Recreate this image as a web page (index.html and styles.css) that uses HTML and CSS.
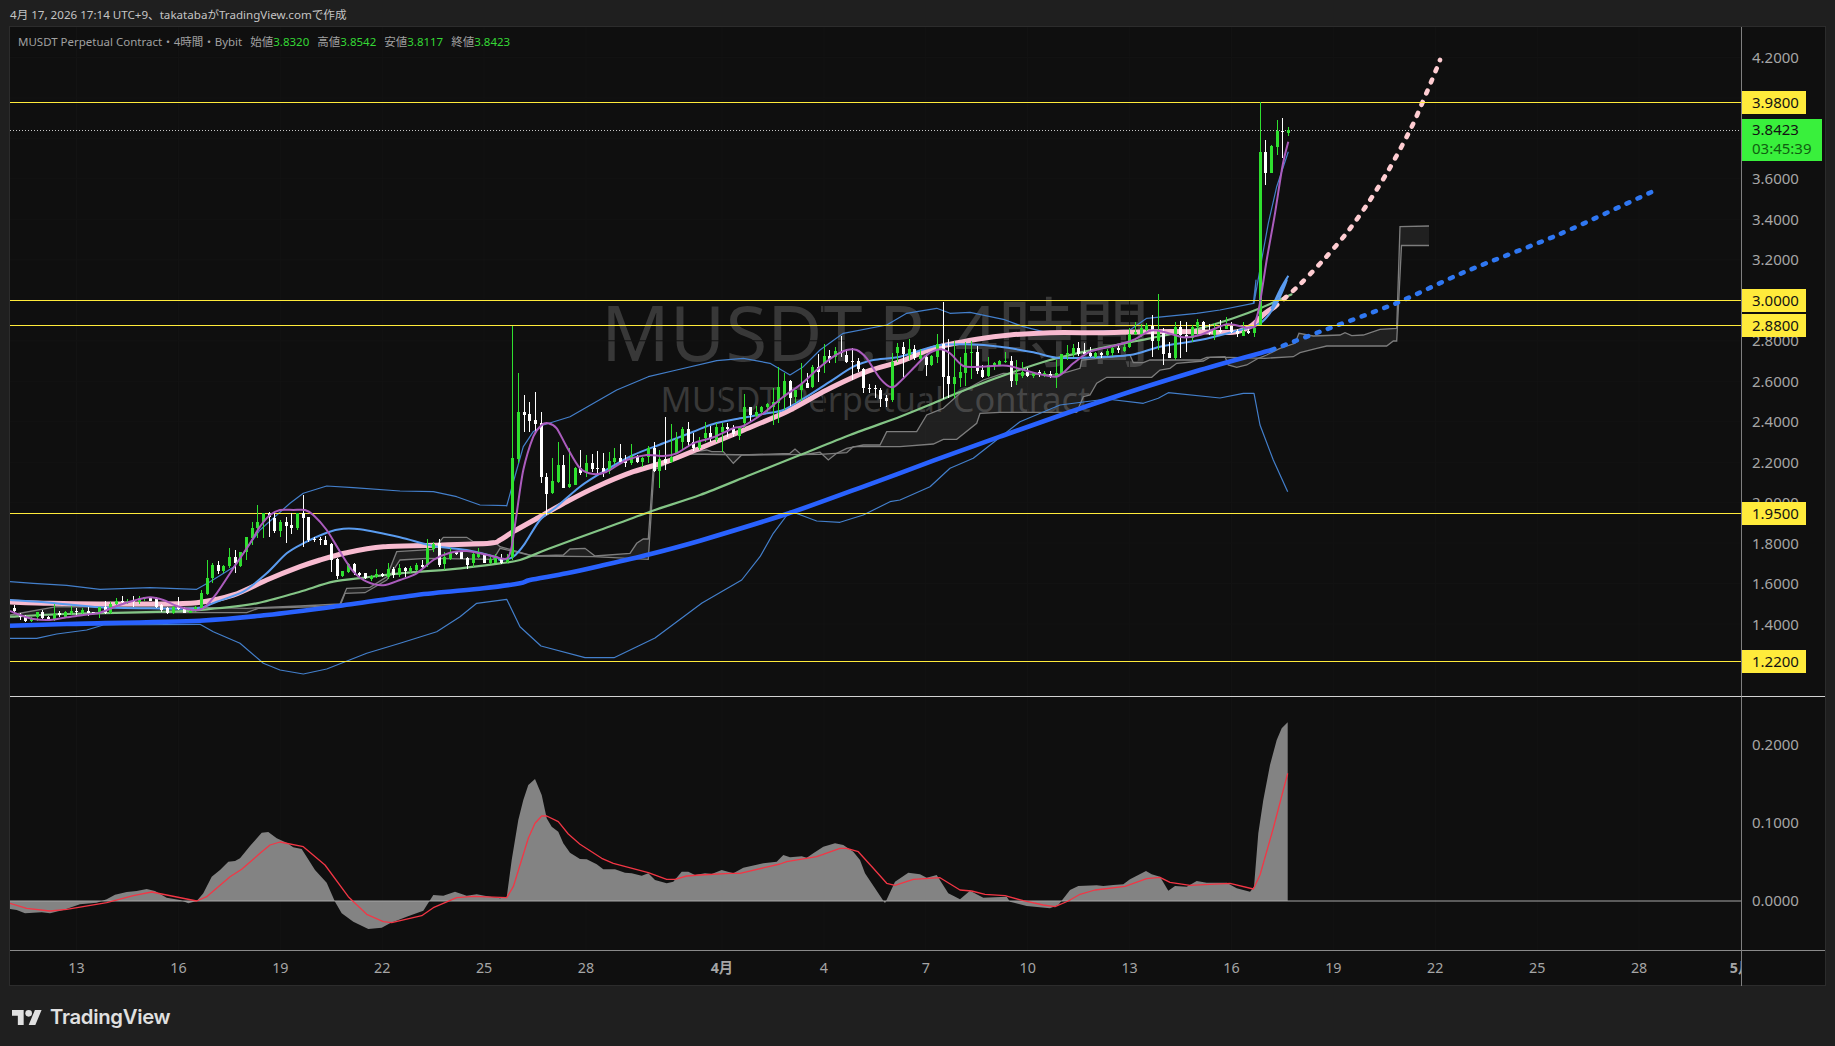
FILE: index.html
```html
<!DOCTYPE html>
<html lang="ja">
<head>
<meta charset="utf-8">
<title>MUSDT Perpetual Contract</title>
<link rel="stylesheet" href="styles.css">
</head>
<body>
<header class="caption">4月 17, 2026 17:14 UTC+9、takatabaがTradingView.comで作成</header>
<main class="chart">
  <section class="pane pane-price">
    <div class="watermark">
      <div class="wm-main">MUSDT.P, 4時間</div>
      <div class="wm-sub">MUSDT Perpetual Contract</div>
    </div>
    <svg id="priceSvg" class="plot" viewBox="10 27 1731 669" xmlns="http://www.w3.org/2000/svg"></svg>
    <div class="legend">
      <span class="l-title">MUSDT Perpetual Contract・4時間・Bybit</span>
      <span class="l-item">始値<b>3.8320</b></span>
      <span class="l-item">高値<b>3.8542</b></span>
      <span class="l-item">安値<b>3.8117</b></span>
      <span class="l-item">終値<b>3.8423</b></span>
    </div>
  </section>
  <aside class="scale" id="priceScale">
    <div class="tag tag-y" style="top:64px">3.9800</div>
    <div class="tag tag-last"><span>3.8423</span><span class="count">03:45:39</span></div>
    <div class="tag tag-y" style="top:262px">3.0000</div>
    <div class="tag tag-y" style="top:287px">2.8800</div>
    <div class="tag tag-y" style="top:475px">1.9500</div>
    <div class="tag tag-y" style="top:623px">1.2200</div>
  </aside>
  <section class="pane pane-osc">
    <svg id="oscSvg" class="plot" viewBox="10 697 1731 253" xmlns="http://www.w3.org/2000/svg"></svg>
  </section>
  <aside class="scale scale-osc">
    <div class="tick" style="top:37px">0.2000</div>
    <div class="tick" style="top:115px">0.1000</div>
    <div class="tick" style="top:193px">0.0000</div>
  </aside>
  <div class="time" id="timeAxis"></div>
  <div class="corner"></div>
</main>
<footer class="brand">
  <svg class="brand-mark" viewBox="0 4 36 18" xmlns="http://www.w3.org/2000/svg"><path d="M14 22H7V11H0V4h14v18zM28 22h-8l7.5-18h8L28 22z"/><circle cx="20" cy="8" r="4"/></svg>
  <span class="brand-name">TradingView</span>
</footer>
<script src="chart.js"></script>
</body>
</html>
```
FILE: styles.css
```css
* { box-sizing: border-box; }
html, body { margin: 0; height: 100%; }
body {
  width: 1835px;
  height: 1046px;
  overflow: hidden;
  background: #1f1f1f;
  display: flex;
  flex-direction: column;
  font-family: "Noto Sans", "Noto Sans CJK JP", sans-serif;
}
.caption {
  height: 26px;
  padding: 7px 0 0 10px;
  font-size: 11.6px;
  line-height: 16px;
  color: #c4c4c4;
}
.chart {
  width: 1817px;
  height: 960px;
  margin-left: 9px;
  border: 1px solid #2c2c2c;
  background: #0f0f0f;
  display: grid;
  grid-template-columns: 1731px 84px;
  grid-template-rows: 670px 254px 35px;
}
.pane { position: relative; overflow: hidden; border-bottom: 1px solid #d2d2d2; }
.pane-osc { border-bottom-color: #8a8a8a; }
.plot { position: absolute; left: 0; top: 0; width: 1731px; height: 669px; display: block; }
.pane-osc .plot { height: 253px; }
.watermark {
  position: absolute;
  inset: 0;
  display: flex;
  flex-direction: column;
  align-items: center;
  padding-top: 255px;
  color: #383838;
  white-space: nowrap;
}
.wm-main { font-size: 76px; line-height: 100px; }
.wm-sub { font-size: 34.3px; line-height: 44px; margin-top: -5px; }
.legend {
  position: absolute;
  left: 8px;
  top: 6px;
  display: flex;
  gap: 8px;
  font-size: 11.5px;
  line-height: 17px;
  color: #a0a0a0;
  white-space: nowrap;
}
.legend b { font-weight: 400; color: #35d835; }
.scale {
  position: relative;
  border-left: 1px solid #808080;
  border-bottom: 1px solid #d2d2d2;
  color: #a6a6a6;
  font-size: 15px;
  overflow: hidden;
}
.scale-osc { border-bottom-color: #8a8a8a; }
.tick { position: absolute; left: 10px; line-height: 20px; }
.tag {
  position: absolute;
  left: 0;
  padding-left: 10px;
  line-height: 23px;
  height: 23px;
  width: 64px;
  color: #131313;
}
.tag-y { background: #ffeb3b; }
.tag-last {
  top: 92px;
  width: 80px;
  height: 42px;
  background: #39f03c;
  display: flex;
  flex-direction: column;
  padding-top: 1px;
  line-height: 19px;
}
.count { color: #106010; }
.time { position: relative; overflow: hidden; color: #a6a6a6; font-size: 14.3px; }
.t-label { position: absolute; top: 7px; line-height: 20px; transform: translateX(-50%); white-space: nowrap; }
.t-major { font-weight: 700; }
.corner { border-left: 1px solid #808080; }
.brand { display: flex; align-items: center; gap: 8px; padding: 19px 0 0 12px; }
.brand-mark { width: 30px; height: 15px; fill: #e0e0e0; }
.brand-name { font-family: Inter, sans-serif; font-weight: 600; font-size: 20.3px; line-height: 24px; letter-spacing: -0.3px; color: #e0e0e0; }
```
FILE: chart.js
```js
const NS = 'http://www.w3.org/2000/svg';
function el(parent, name, attrs) {
  const e = document.createElementNS(NS, name);
  for (const k in attrs) e.setAttribute(k, attrs[k]);
  parent.appendChild(e);
  return e;
}
function S(x0, y0, a) {
  const r = [];
  for (let i = 0; i < a.length; i += 2) r.push([x0 + a[i] / 3, y0 + a[i + 1] / 3]);
  return r;
}
const Z4 = a => S(0, 480, a), Z5 = a => S(500, 300, a), Z6 = a => S(900, 280, a), Z7 = a => S(1200, 90, a);
function poly(p) { return 'M' + p.map(q => q[0].toFixed(1) + ' ' + q[1].toFixed(1)).join('L'); }
function smooth(p) {
  let d = 'M' + p[0][0].toFixed(1) + ' ' + p[0][1].toFixed(1);
  for (let i = 0; i < p.length - 1; i++) {
    const a = p[Math.max(i - 1, 0)], b = p[i], c = p[i + 1], e = p[Math.min(i + 2, p.length - 1)];
    const t = 0.14;
    d += 'C' + (b[0] + (c[0] - a[0]) * t).toFixed(1) + ' ' + (b[1] + (c[1] - a[1]) * t).toFixed(1) + ' ' +
      (c[0] - (e[0] - b[0]) * t).toFixed(1) + ' ' + (c[1] - (e[1] - b[1]) * t).toFixed(1) + ' ' +
      c[0].toFixed(1) + ' ' + c[1].toFixed(1);
  }
  return d;
}
const svg = document.getElementById('priceSvg');
const priceY = p => 300.3 + (3 - p) * 202.4;
const dayX = d => 76.5 + 33.97 * (d - 13);

/* faint grid */
const gridDays = [13,16,19,22,25,28,32,35,38,41,44,47,50,53,56,59,62];
gridDays.forEach(d => el(svg, 'line', { x1: dayX(d), x2: dayX(d), y1: 27, y2: 696, stroke: '#131313' }));
for (let p = 1.2; p < 4.4; p += 0.2) el(svg, 'line', { x1: 10, x2: 1741, y1: priceY(p), y2: priceY(p), stroke: '#131313' });

/* ichimoku cloud */
const cloudTop = [].concat(
  Z4([30,405,170,380,600,382,740,385,900,378,1020,372,1040,325,1110,322,1160,290,1190,215,1300,208,1330,172,1400,172,1420,185,1460,185,1480,182]),
  Z5([0,740,30,748,100,768,190,765,210,747,255,745,285,768,390,760,410,730,430,717,445,717,460,500,560,458,620,450,635,455,670,455,700,490,725,465,870,460,885,447,905,465,960,457,985,480,1010,460,1040,445,1090,435,1140,435,1160,395]),
  Z6([50,455,80,405,105,395,130,385,185,335,250,300,310,280,470,285,540,265,545,240,690,225,700,248,730,248,750,240,900,240,920,232,975,230,985,255,1010,262,1040,255,1075,235,1100,225,1140,205,1185,190,1197,160,1240,168,1320,165,1335,158,1355,167,1390,165,1440,148,1490,145]),
  [[1400,226.7],[1429,226]]
);
const cloudBot = [].concat(
  Z4([30,410,300,398,740,398,775,385,1020,378,1035,340,1095,338,1160,300,1200,240,1280,235,1480,238]),
  Z5([0,745,100,768,280,770,445,778,462,510,560,462,760,465,960,463,1040,458,1060,440,1190,440]),
  Z6([0,500,100,492,130,478,170,478,230,430,240,400,300,397,530,397,550,350,570,345,590,310,620,292,755,292,780,270,810,265,830,250,910,243,930,232,990,232,1095,235,1180,230,1200,218,1250,205,1280,198,1460,198,1480,183,1490,183]),
  [[1401.5,245.5],[1429,245.5]]
);
el(svg, 'path', { d: poly(cloudTop) + 'L' + cloudBot.slice().reverse().map(q => q[0].toFixed(1) + ' ' + q[1].toFixed(1)).join('L') + 'Z', fill: 'rgba(255,255,255,0.075)', stroke: 'none' });
el(svg, 'path', { d: poly(cloudTop), fill: 'none', stroke: '#7d7d7d', 'stroke-width': 1.3 });
el(svg, 'path', { d: poly(cloudBot), fill: 'none', stroke: '#7d7d7d', 'stroke-width': 1.3 });

/* bollinger outer bands */
const bbUp = [].concat(
  Z4([30,305,100,310,200,316,300,328,450,323,590,328,630,305,700,262,780,150,870,70,910,40,980,18,1060,23,1200,33,1300,35,1370,50,1440,75,1520,77]),
  Z5([20,618,50,510,70,440,100,395,130,375,210,350,350,270,445,230,530,210,650,182,730,175,810,190,870,225,910,200,960,150,1030,100,1160,75]),
  Z6([20,100,50,95,110,85,150,100,210,97,310,118,370,140,450,160,570,155,690,150,740,115,890,100,960,90,1060,70,1068,0]),
  Z7([162,640,183,520,205,400,230,290,265,185])
);
const bbDn = [].concat(
  Z4([30,475,110,475,170,462,260,450,310,435,600,433,640,455,720,490,790,550,840,570,910,582,980,567,1100,520,1200,490,1310,455,1380,410,1430,370,1520,358,1560,440]),
  [[541,646],[585,657.7],[614,657.7],[655,638],[702,603]],
  Z5([725,840,780,770,820,700,870,633,950,663,1020,667,1090,645,1170,605]),
  Z6([0,660,90,620,150,565,220,535,360,425,480,375,620,357,730,370,775,355,805,338,960,354,1030,340,1062,340,1080,435,1120,540,1163,635])
);
[bbUp, bbDn].forEach(p => el(svg, 'path', { d: poly(p), fill: 'none', stroke: '#437fcb', 'stroke-width': 1.2, 'stroke-linejoin': 'round' }));

/* thick blue */
const blueThick = [].concat(
  Z4([30,437,200,432,600,422,800,405,1000,380,1250,345,1450,325,1560,310]),
  Z5([90,840,200,820,300,798,440,765,600,722,860,642,1100,556,1300,482,1500,410]),
  Z6([600,365,900,270,1115,210])
);
el(svg, 'path', { d: smooth(blueThick), fill: 'none', stroke: '#2962ff', 'stroke-width': 4.6 });

const green = [].concat(
  Z4([30,410,200,402,500,395,620,388,770,370,900,335,1000,305,1100,292,1200,280,1350,268,1500,250]),
  Z5([60,780,150,745,300,690,450,635,600,585,750,525,900,465,1050,405]),
  Z6([0,410,100,370,170,340,300,290,450,240,600,205,750,175,900,145,1000,115,1080,85,1170,45]),
  Z7([265,618])
);
el(svg, 'path', { d: smooth(green), fill: 'none', stroke: '#84c586', 'stroke-width': 2.2 });

const pink = [].concat(
  Z4([30,366,150,370,300,372,450,372,590,368,700,345,800,300,900,260,960,240,1040,218,1150,200,1300,196,1470,190]),
  Z5([0,720,40,695,120,650,200,605,290,560,400,515,500,485,600,445,720,395,860,335,980,270,1100,215]),
  Z6([0,245,100,205,230,178,330,165,450,158,600,158,750,155,900,155,1000,157,1050,140,1095,100]),
  [[1275,306.7]]
);
el(svg, 'path', { d: smooth(pink), fill: 'none', stroke: '#f8bbd0', 'stroke-width': 5, 'stroke-linecap': 'butt' });

const pinkDash = [[1275,306.7]].concat(Z7([298,585,373,507,443,425,505,338,563,245,615,150,647,85]), [[1434,75],[1440,60]]);
el(svg, 'path', { d: smooth(pinkDash), fill: 'none', stroke: '#ffcdd2', 'stroke-width': 4.6, 'stroke-dasharray': '3 9', 'stroke-linecap': 'round' });

const blueDash = [[1271.7,350],[1320,331.7],[1396.7,303],[1464.6,272],[1560,234],[1657,189.5]];
el(svg, 'path', { d: smooth(blueDash), fill: 'none', stroke: '#2f77f2', 'stroke-width': 4.6, 'stroke-dasharray': '3 9', 'stroke-linecap': 'round' });

const lightBlue = [].concat(
  Z4([30,360,150,368,300,382,450,385,590,385,650,365,730,335,800,280,860,220,910,190,980,158,1030,146,1080,148,1200,172,1300,198,1400,210,1490,232]),
  Z5([0,780,40,770,75,730,120,660,170,620,240,560,310,515,400,465,490,430,580,395,640,372,720,355,800,340,850,330,920,290,990,245,1060,200,1120,180]),
  Z6([0,230,110,197,200,193,300,200,400,217,470,233,560,233,690,225,780,200,900,180,1000,155,1080,130,1130,70,1160,0]),
  Z7([215,655,240,600,265,557])
);
el(svg, 'path', { d: smooth(lightBlue), fill: 'none', stroke: '#5a9cf0', 'stroke-width': 2 });

/* horizontal levels */
[102.5, 300.5, 325.5, 513.5, 661.5].forEach(y => el(svg, 'line', { x1: 10, x2: 1741, y1: y, y2: y, stroke: '#ffeb3b', 'stroke-width': 1, 'shape-rendering': 'crispEdges' }));
el(svg, 'line', { x1: 10, x2: 1741, y1: 130.5, y2: 130.5, stroke: '#c8c8c8', 'stroke-width': 1, 'stroke-dasharray': '1 2' });

/* candles: green?, high, low, bodyTop, bodyBottom in zoom coordinates */
const A = [[0,375,400,383,392],[0,400,420,405,412],[0,405,425,410,422],[1,410,427,415,424],[1,395,422,396,412],[0,390,420,396,414],[0,408,422,412,418],[1,372,422,402,418],[0,392,412,400,405],[1,392,412,396,410],[1,378,405,392,398],[0,385,405,392,396],[1,384,402,390,398],[0,382,408,392,398],[0,395,400,397,398],[1,380,413,382,400],[0,363,402,382,398],[1,365,402,372,398],[1,353,378,362,372],[0,348,375,363,367],[1,358,372,362,366],[0,348,380,362,366],[1,348,372,355,365],[1,350,362,352,358],[0,350,363,355,362],[0,352,385,358,380],[0,372,395,375,390],[0,382,402,385,400],[1,378,402,382,400],[0,350,390,378,388],[0,382,400,386,398],[1,390,400,392,400],[1,378,396,382,392],[1,330,390,340,385],[1,240,345,294,342],[1,250,308,255,295],[0,243,282,255,274],[1,255,280,257,272],[1,205,265,232,258],[0,210,278,232,250],[1,215,260,217,258],[1,170,240,172,215],[1,125,195,145,175],[1,75,175,125,145],[1,100,175,100,125],[0,95,170,100,112],[0,100,158,115,152],[1,120,170,125,152],[0,112,188,125,138],[0,100,162,135,145],[1,100,150,100,145],[0,45,200,100,115],[0,110,185,112,180],[0,170,187,178,180],[0,172,195,178,180],[0,168,195,180,195],[0,190,275,192,240],[0,235,296,236,288],[1,272,292,273,288],[1,248,278,252,276],[0,250,285,252,280],[0,275,290,278,285],[0,278,298,280,295],[1,285,303,288,298],[1,267,295,282,292],[0,278,290,282,288],[1,250,298,266,292],[0,260,293,266,285],[1,252,290,265,285],[0,260,290,264,274],[1,258,278,264,272],[1,250,272,254,270],[0,240,265,255,262],[1,178,262,205,255],[1,185,215,192,208],[0,178,262,190,255],[1,215,270,232,252],[1,205,240,218,238],[0,212,224,214,222],[0,212,238,216,236],[0,232,268,235,255],[1,215,260,222,250],[1,203,235,218,232],[0,225,250,226,248],[1,230,252,238,248],[1,222,250,235,248],[0,222,252,235,248],[1,222,248,235,246]];
const B = [[1,78,780,475,770],[1,220,490,335,478],[0,285,395,337,345],[0,305,395,342,362],[0,277,400,360,372],[0,337,550,370,530],[0,520,645,530,582],[1,475,582,543,580],[1,425,548,495,545],[0,465,565,495,565],[1,445,565,552,562],[1,500,555,505,555],[0,450,525,503,520],[1,465,530,488,520],[0,462,515,488,508],[0,453,525,503,508],[0,458,530,505,520],[1,455,522,483,512],[1,445,493,475,487],[0,432,490,475,487],[0,465,502,482,490],[1,432,495,467,490],[0,465,490,470,485],[1,470,500,473,487],[1,438,490,445,470],[0,425,515,445,512],[1,450,563,478,512],[0,350,510,478,490],[1,372,488,470,485],[1,395,460,418,458],[1,380,450,388,425],[0,365,440,387,425],[0,400,452,427,445],[1,410,450,425,445],[1,367,425,400,415],[0,378,425,400,418],[1,370,425,382,420],[1,370,455,380,395],[0,370,412,380,388],[0,375,410,387,403],[1,378,420,382,408],[1,283,385,322,370],[0,320,362,320,345],[1,318,355,335,348],[1,318,345,320,335],[1,310,335,312,322],[1,265,375,307,320],[1,200,368,262,308],[1,220,330,243,290],[0,240,318,243,295],[1,270,310,270,292],[1,190,303,252,270],[0,220,265,248,264],[1,195,265,200,262],[0,162,245,200,215],[1,133,220,168,192],[0,150,188,168,178],[1,140,188,153,170],[0,108,170,155,158],[0,150,188,165,185],[0,143,240,183,185],[0,175,215,183,208],[0,205,280,208,265],[0,252,278,263,268],[0,255,295,265,268],[0,265,320,270,297],[0,285,320,293,302],[1,158,305,185,300],[1,130,185,142,160]];
const C = [[0,185,290,200,222],[1,178,240,208,225],[0,195,240,207,235],[1,208,240,225,238],[0,225,288,232,255],[1,225,258,228,255],[1,163,250,193,230],[0,67,357,193,290],[0,178,355,288,312],[1,183,355,292,312],[1,230,322,275,293],[1,185,318,218,278],[1,183,298,217,220],[0,197,282,217,272],[0,255,295,270,290],[1,232,290,255,288],[1,245,270,250,258],[1,240,258,243,255],[1,217,248,243,246],[0,228,322,243,302],[1,240,315,282,302],[1,245,295,275,287],[0,265,290,277,288],[1,275,293,280,288],[0,270,292,275,285],[1,272,292,280,284],[0,272,295,283,287],[1,240,325,280,292],[1,225,285,222,282],[1,195,240,220,225],[1,193,232,205,222],[0,185,228,205,222],[0,190,228,217,222],[0,202,232,220,228],[1,215,235,220,230],[0,215,235,220,224],[1,208,228,213,226],[1,195,228,205,218],[0,195,220,203,210],[1,188,215,202,213],[1,145,205,163,202],[1,127,165,155,163],[1,132,172,145,162],[1,128,152,135,150],[0,105,230,137,182],[1,43,210,152,182],[0,145,255,160,222],[0,185,235,218,234],[1,125,240,142,235],[0,123,235,142,165],[0,125,215,165,172],[1,135,185,140,175],[1,118,165,127,142],[0,123,150,127,150],[0,132,165,150,158],[1,130,180,150,165],[0,120,160,150,155],[1,110,148,138,148],[0,125,160,138,155],[0,148,172,152,163],[1,125,168,152,167],[0,145,162,152,158],[1,135,170,143,158]];
const D = [[1,37,705,185,705],[0,150,285,185,248],[1,165,248,168,248],[1,90,195,122,170],[0,85,203,122,126],[1,112,138,119,128]];
const cg = el(svg, 'g', { 'shape-rendering': 'crispEdges' });
let idx = 0;
[[A,480],[B,300],[C,280],[D,90]].forEach(([set, y0]) => set.forEach(c => {
  const x = Math.round(14 + 5.662 * idx), col = c[0] ? '#2fe02f' : '#ffffff';
  const y = v => y0 + v / 3;
  el(cg, 'rect', { x: x, y: y(c[1]), width: 1, height: y(c[2]) - y(c[1]), fill: col });
  el(cg, 'rect', { x: x - 1, y: y(c[3]), width: 3, height: Math.max(1, y(c[4]) - y(c[3])), fill: col });
  idx++;
}));

const purple = [].concat(
  Z4([30,393,60,405,100,417,150,420,200,412,250,405,300,398,350,378,400,362,450,352,490,360,530,378,580,390,610,385,650,340,700,265,750,190,780,140,810,105,840,90,880,90,915,90,940,105,980,150,1020,215,1060,275,1100,305,1150,316,1200,300,1250,280,1300,240,1350,218,1400,213,1450,222,1490,232]),
  Z5([0,775,22,775,35,740,50,640,70,510,100,410,125,375,145,370,170,385,200,440,240,505,280,522,320,515,380,480,440,465,490,468,530,460,580,430,640,412,700,385,730,378,790,340,850,290,900,255,950,210,1000,170,1040,150,1070,150,1100,175,1140,235,1175,262]),
  Z6([0,305,40,265,80,225,120,208,150,220,190,258,240,260,320,257,390,275,470,290,520,250,570,215,640,198,700,180,750,152,790,155,850,172,900,165,980,133,1040,143,1065,140]),
  Z7([165,700,178,650,200,510,225,370,248,225,265,155])
);
el(svg, 'path', { d: smooth(purple), fill: 'none', stroke: '#ab5cbd', 'stroke-width': 2 });

/* oscillator */
const osc = document.getElementById('oscSvg');
gridDays.forEach(d => el(osc, 'line', { x1: dayX(d), x2: dayX(d), y1: 697, y2: 950, stroke: '#131313' }));
const Z9 = a => S(0, 760, a), Z10 = a => S(500, 760, a), Z11 = a => S(1000, 700, a);
const area = [].concat(
  Z9([30,447,50,450,75,460,100,458,125,457,150,460,190,450,240,433,290,428,320,418,345,404,380,396,410,393,440,387,465,393,500,413,540,420,565,430,590,423,610,400,635,350,660,330,685,305,705,303,720,295,750,258,785,218,805,216,830,235,860,248,880,262,905,267,945,330,980,368,1005,425,1025,460,1060,485,1105,507,1145,503,1170,490,1220,470,1270,452,1300,405,1330,407,1365,395,1400,407,1430,403,1470,410,1500,415,1520,412]),
  Z10([35,300,55,180,70,120,85,75,105,57,125,105,140,175,155,200,175,215,190,250,210,278,240,297,260,298,290,313,310,328,345,328,375,338,395,340,425,347,445,340,465,360,500,370,520,365,545,335,565,335,585,345,615,340,635,342,665,330,700,340,730,323,790,310,830,305,850,285,870,292,905,289,920,293,940,280,970,260,1005,250,1030,255,1060,275,1080,300,1095,340,1125,385,1155,430,1185,365,1225,338,1260,343,1280,353,1310,345,1345,400,1380,418,1410,392,1450,413]),
  Z11([20,590,30,605,80,618,150,625,175,615,210,570,235,558,290,556,310,558,340,555,370,553,390,538,438,513,455,523,480,530,505,572,525,558,560,560,590,543,620,548,680,548,710,565,750,575,762,560,775,400,790,300,810,195,830,120,845,85,863,67])
);
const zeroY = 901, endX = 1000 + 863 / 3;
el(osc, 'path', { d: 'M10 ' + zeroY + 'L' + poly(area).slice(1) + 'L' + endX.toFixed(1) + ' ' + zeroY + 'Z', fill: '#838383' });
el(osc, 'line', { x1: 10, x2: 1741, y1: zeroY, y2: zeroY, stroke: '#a8a8a8', 'stroke-width': 1 });
const red = [].concat(
  Z9([30,430,80,445,150,453,200,448,320,428,400,407,455,396,590,423,620,410,690,350,725,328,780,280,810,255,840,246,910,260,975,315,1045,410,1100,463,1150,485,1175,488,1265,467,1300,443,1370,413,1420,409,1520,413]),
  Z10([40,380,85,235,105,190,125,168,140,168,175,185,205,222,240,253,305,295,340,310,445,338,500,358,525,358,560,348,600,345,690,340,720,340,840,312,860,305,950,290,1020,265,1040,265,1075,275,1120,325,1160,370,1185,376,1240,358,1320,353,1380,390,1415,393,1455,403]),
  Z11([15,587,70,602,130,615,165,620,205,603,240,583,285,570,375,559,440,536,480,532,510,547,570,556,690,550,760,567,780,525,820,385,850,270,863,220])
);
el(osc, 'path', { d: poly(red), fill: 'none', stroke: '#f23645', 'stroke-width': 1.3, 'stroke-linejoin': 'round' });

/* price scale ticks */
const scale = document.getElementById('priceScale');
[4.2, 3.6, 3.4, 3.2, 2.8, 2.6, 2.4, 2.2, 2.0, 1.8, 1.6, 1.4].forEach(p => {
  const t = document.createElement('div');
  t.className = 'tick';
  t.textContent = p.toFixed(4);
  t.style.top = (priceY(p) - 27 - 10.5) + 'px';
  scale.insertBefore(t, scale.firstChild);
});

/* time axis */
const axis = document.getElementById('timeAxis');
[[13,'13'],[16,'16'],[19,'19'],[22,'22'],[25,'25'],[28,'28'],[32,'4月',1],[35,'4'],[38,'7'],[41,'10'],[44,'13'],[47,'16'],[50,'19'],[53,'22'],[56,'25'],[59,'28'],[62,'5月',1]].forEach(([d, s, major]) => {
  const t = document.createElement('div');
  t.className = major ? 't-label t-major' : 't-label';
  t.textContent = s;
  t.style.left = (dayX(d) - 10) + 'px';
  axis.appendChild(t);
});
```
